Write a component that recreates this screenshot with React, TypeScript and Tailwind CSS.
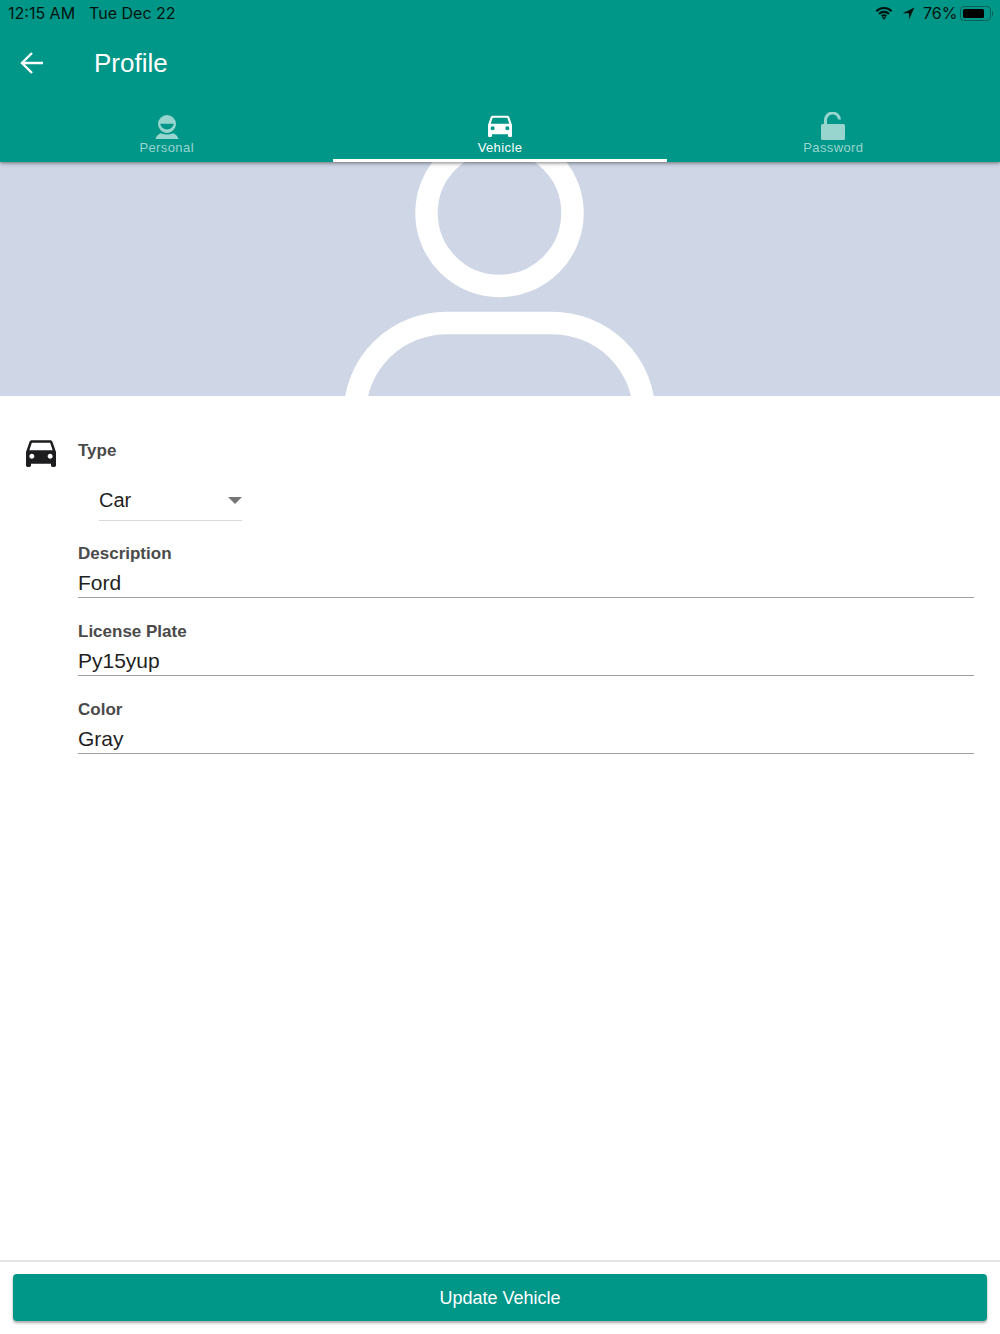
import type { ReactNode } from "react";

const CAR_PATH =
  "M18.92 6.01C18.72 5.42 18.16 5 17.5 5h-11c-.66 0-1.21.42-1.42 1.01L3 12v8c0 .55.45 1 1 1h1c.55 0 1-.45 1-1v-1h12v1c0 .55.45 1 1 1h1c.55 0 1-.45 1-1v-8l-2.08-5.99zM6.5 16c-.83 0-1.5-.67-1.5-1.5S5.67 13 6.5 13s1.5.67 1.5 1.5S7.33 16 6.5 16zm11 0c-.83 0-1.5-.67-1.5-1.5s.67-1.5 1.5-1.5 1.5.67 1.5 1.5-.67 1.5-1.5 1.5zM5 11l1.5-4.5h11L19 11H5z";

function CarIcon({ className }: { className: string }) {
  return (
    <svg viewBox="0 0 24 24" className={className} fill="currentColor">
      <path d={CAR_PATH} />
    </svg>
  );
}

function PersonIcon() {
  return (
    <svg viewBox="0 0 24 24" className="mb-[1px] h-[24px] w-[24px] text-[#99d5cf]" fill="currentColor">
      <path
        fillRule="evenodd"
        d="M12 0a9 9 0 1 1 0 18a9 9 0 0 1 0-18zM5.200 8.800h13.600c-.8 3.600-3.600 5.600-6.800 5.600s-6-2-6.800-5.600z"
      />
      <path d="M0.500 24c.8-3 3-5 5.500-5.800c3.700 1.700 8.300 1.700 12 0c2.500.8 4.700 2.800 5.500 5.800z" />
    </svg>
  );
}

function LockIcon() {
  return (
    <svg viewBox="0 0 24 28" className="h-[28px] w-[24px] text-[#99d5cf]" fill="none">
      <path d="M4.500 13V8.500a7 7 0 0 1 14-1" stroke="currentColor" strokeWidth="3" />
      <rect x="0" y="12" width="24" height="16" rx="1.500" fill="currentColor" />
    </svg>
  );
}

function Tab({
  icon,
  label,
  active,
}: {
  icon: ReactNode;
  label: string;
  active?: boolean;
}) {
  return (
    <div className="relative flex h-[58px] flex-col items-center justify-end pb-[7px]">
      {icon}
      <span
        className={`text-[13px] leading-[15px] tracking-[0.4px] ${active ? "text-white" : "text-[#99d5cf]"}`}
      >
        {label}
      </span>
      {active ? <div className="absolute right-0 bottom-0 left-0 h-[3px] bg-white" /> : null}
    </div>
  );
}

function Field({ label, value }: { label: string; value: string }) {
  return (
    <div className="flex h-[78px] flex-col">
      <label className="h-[26px] text-[17px] leading-[26px] font-bold text-[#4a4a4a]">{label}</label>
      <div className="h-[31px] border-b border-[#a0a0a0] text-[21px] leading-[32px] text-[#1f1f1f]">
        {value}
      </div>
    </div>
  );
}

export default function App() {
  return (
    <div className="flex h-[1334px] w-[1000px] flex-col overflow-hidden bg-white [font-family:'Liberation_Sans',sans-serif]">
      <header className="relative z-10 bg-[#009688] shadow-[0_1px_4px_rgba(0,0,0,0.5)]">
        <div className="flex h-[28px] items-center justify-between pr-[7px] pb-[2px] pl-[8px] text-[16px] text-[#00140f] [font-family:Inter,sans-serif]">
          <div className="flex gap-[14px]">
            <span>12:15 AM</span>
            <span>Tue Dec 22</span>
          </div>
          <div className="flex items-center">
            <svg viewBox="0 0 20 15" className="mr-[9px] h-[14px] w-[18px]" fill="none" stroke="currentColor" strokeWidth="2.400">
              <path d="M1.500 5.500a12 12 0 0 1 17 0" />
              <path d="M4.500 8.500a8 8 0 0 1 11 0" />
              <path d="M7.500 11a4 4 0 0 1 5 0" />
              <path d="M10 15l-2.500-2.800h5z" fill="currentColor" stroke="none" />
            </svg>
            <svg viewBox="0 0 14 14" className="mr-[8px] h-[13px] w-[13px]" fill="currentColor">
              <path d="M13.500 0.500L7.500 13.500V6.800H0.500z" />
            </svg>
            <span className="mr-[2px]">76%</span>
            <div className="h-[15px] w-[31px] rounded-[4px] border border-[#0b5f56] p-[2px]">
              <div className="h-full w-[21px] rounded-[1.500px] bg-black" />
            </div>
            <div className="ml-[1px] h-[5px] w-[1.500px] rounded-r bg-[#0b5f56]" />
          </div>
        </div>

        <div className="flex h-[76px] items-center pb-[6px]">
          <svg viewBox="0 0 24 24" className="ml-[20px] h-[24px] w-[24px] text-white" fill="none" stroke="currentColor" strokeWidth="2.400">
            <path d="M23 12H2M12 2L2 12l10 10" />
          </svg>
          <h1 className="ml-[50px] text-[26px] leading-[38px] font-normal text-white">Profile</h1>
        </div>

        <div className="grid h-[58px] grid-cols-3">
          <Tab icon={<PersonIcon />} label="Personal" />
          <Tab icon={<CarIcon className="mb-[-1px] h-[32px] w-[32px] text-white" />} label="Vehicle" active />
          <Tab icon={<LockIcon />} label="Password" />
        </div>
      </header>

      <div className="h-[234px] shrink-0 bg-[#cfd6e6]">
        <svg viewBox="0 0 1000 234" className="h-[234px] w-[1000px]" fill="none" stroke="white" strokeWidth="22.500">
          <circle cx="499.500" cy="51" r="73" />
          <path d="M355 251A92 90 0 0 1 447 161H552A92 90 0 0 1 644 251" />
        </svg>
      </div>

      <main className="flex flex-1 flex-col">
        <div className="flex h-[104px] flex-col pt-[42px]">
          <div className="relative pl-[78px]">
            <CarIcon className="absolute top-[-6px] left-[21px] h-[40px] w-[40px] text-[#1d1d1f]" />
            <div className="h-[26px] text-[17px] leading-[26px] font-bold text-[#4a4a4a]">Type</div>
            <div className="mt-[27px] ml-[21px] flex h-[30px] w-[143px] items-start justify-between border-b border-[#d9d9d9]">
              <span className="text-[20px] leading-[18px] text-[#1f1f1f]">Car</span>
              <div className="mt-[6px] h-0 w-0 border-t-[7px] border-r-[7px] border-l-[7px] border-t-[#757575] border-r-transparent border-l-transparent" />
            </div>
          </div>
        </div>
        <div className="mt-[41px] pr-[26px] pl-[78px]">
          <Field label="Description" value="Ford" />
          <Field label="License Plate" value="Py15yup" />
          <Field label="Color" value="Gray" />
        </div>
      </main>

      <footer className="h-[74px] shrink-0 border-t-2 border-[#e3e3e3] px-[13px] pt-[12px]">
        <button
          type="button"
          className="h-[47px] w-full rounded-[4px] bg-[#009688] pt-[2px] text-[18px] text-white shadow-[0_2px_3px_rgba(0,0,0,0.35)]"
        >
          Update Vehicle
        </button>
      </footer>
    </div>
  );
}
